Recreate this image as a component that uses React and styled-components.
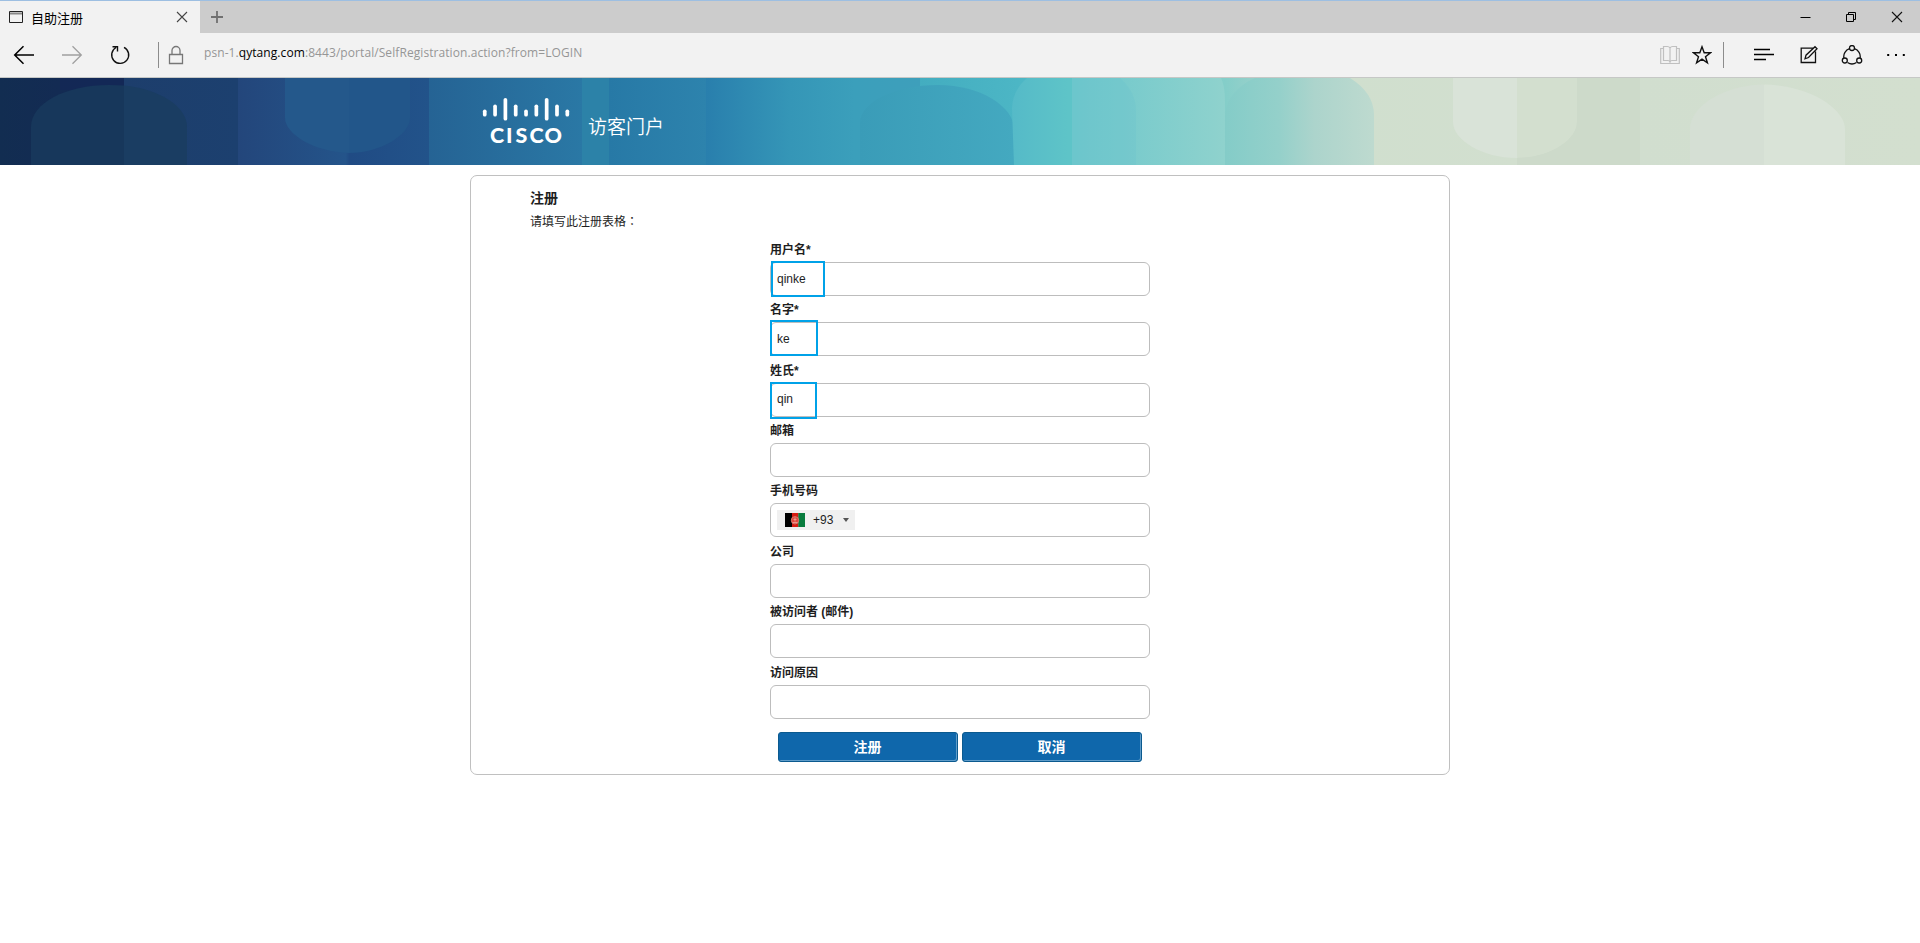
import React from "react";
import styled, { createGlobalStyle } from "styled-components";

const GlobalStyle = createGlobalStyle`
  * { box-sizing: border-box; }
  body {
    margin: 0;
    background: #fff;
    color: #1e1e1e;
    font-family: "Liberation Sans", "Noto Sans CJK SC", sans-serif;
    overflow: hidden;
  }
`;

/* ---------- browser chrome ---------- */
const TabStrip = styled.div`
  display: flex;
  height: 33px;
  background: #ccc;
  border-top: 1px solid #9dbfe2;
`;
const Tab = styled.div`
  display: flex;
  align-items: center;
  width: 200px;
  padding: 0 12px 0 8px;
  background: #f2f2f2;
`;
const TabTitle = styled.span`
  flex: 1;
  margin: 1px 0 0 7px;
  font: 13px/18px "Noto Sans CJK SC", sans-serif;
  color: #000;
`;
const NewTab = styled.div`
  display: flex;
  align-items: center;
  padding-left: 10px;
`;
const WindowControls = styled.div`
  display: flex;
  align-items: center;
  gap: 33px;
  margin-left: auto;
  padding-right: 17px;
`;
const Toolbar = styled.div`
  display: flex;
  align-items: center;
  height: 45px;
  padding: 0 14px 0 13px;
  background: #f2f2f2;
  border-bottom: 1px solid #c6c8c6;
`;
const NavButtons = styled.div`
  display: flex;
  gap: 26px;
`;
const Divider = styled.div`
  width: 1px;
  height: 26px;
  margin: 0 ${(p) => p.$after}px 0 ${(p) => p.$before}px;
  background: #8c8c8c;
`;
const Address = styled.div`
  flex: 1;
  margin: -4px 0 0 20px;
  font: 12px/18px "Open Sans", sans-serif;
  letter-spacing: 0.075px;
  color: #969696;
  white-space: pre;
`;
const Host = styled.span`
  color: #000;
`;
const Tools = styled.div`
  display: flex;
  align-items: center;
  gap: ${(p) => p.$gap}px;
`;

/* ---------- banner ---------- */
const Banner = styled.header`
  position: relative;
  display: flex;
  height: 87px;
  padding: 20px 0 0 482px;
  overflow: hidden;
`;
const BannerArt = styled.svg`
  position: absolute;
  inset: 0;
`;
const Logo = styled.svg`
  position: relative;
`;
const PortalName = styled.h1`
  position: relative;
  margin: 14px 0 0 16px;
  font: 350 19px/28px "Noto Sans CJK SC", sans-serif;
  color: #fff;
`;

/* ---------- form ---------- */
const Card = styled.main`
  width: 980px;
  height: 600px;
  margin: 10px auto 0;
  padding: 11px 59px 0;
  border: 1px solid #c0c0c0;
  border-radius: 7px;
`;
const Title = styled.h2`
  margin: 0;
  font-size: 14px;
  line-height: 22px;
`;
const Intro = styled.p`
  height: 21px;
  margin: 3px 0 0;
  font-size: 12px;
  line-height: 20px;
`;
const CenteredColon = styled.span`
  font-family: "Noto Sans CJK TC", sans-serif;
  line-height: 1;
`;
const Form = styled.form`
  width: 380px;
  margin: 6.8px auto 0;
`;
const Field = styled.div`
  height: 60.4px;
`;
const Label = styled.span`
  display: block;
  height: 22px;
  font-size: 12px;
  font-weight: 700;
  line-height: 21px;
`;
const Control = styled.span`
  position: relative;
  display: flex;
  align-items: center;
  height: 34px;
  padding-left: 6px;
  border: 1px solid #bdbdbd;
  border-radius: 6px;
  font-size: 12px;
`;
const Marker = styled.span`
  position: absolute;
  left: ${(p) => p.$x}px;
  top: ${(p) => p.$y}px;
  width: ${(p) => p.$w}px;
  height: ${(p) => p.$h}px;
  border: 2px solid #00a2e8;
`;
const Value = styled.span`
  margin-top: ${(p) => p.$shift || 0}px;
`;
const CountryCode = styled.span`
  display: flex;
  align-items: center;
  width: 78px;
  height: 20px;
  padding-left: 8px;
  background: #f0f0f0;
`;
const Code = styled.span`
  width: 30px;
  margin-left: 8px;
`;
const Caret = styled.span`
  border: 3px solid transparent;
  border-top: 4px solid #555;
  border-bottom: 0;
`;
const Actions = styled.div`
  display: flex;
  justify-content: center;
  gap: 4px;
  margin-top: 9px;
`;
const Button = styled.button`
  width: 180px;
  height: 30px;
  padding: 0 1px 0 0;
  border: 1px solid #0b5a8f;
  border-radius: 3px;
  background: #0f67ab;
  box-shadow: inset -1px -1px 0 #5f9cc9;
  color: #fff;
  font: 700 14px/26px "Liberation Sans", "Noto Sans CJK SC", sans-serif;
`;

const Icon = ({ w, h, color = "#000", sw = 1, children }) => (
  <svg width={w} height={h} viewBox={`0 0 ${w} ${h}`} fill="none" stroke={color} strokeWidth={sw}>
    {children}
  </svg>
);

const CloseIcon = ({ color }) => (
  <Icon w={12} h={12} color={color} sw={1.1}>
    <path d="M1 1l10 10M11 1L1 11" />
  </Icon>
);

const Flag = () => (
  <svg width="20" height="14">
    <path fill="#000" d="M0 0h7v14H0z" />
    <path fill="#d51c12" d="M7 0h6.500v14H7z" />
    <path fill="#087b3d" d="M13.300 0H20v14h-6.700z" />
    <circle cx="10" cy="7.300" r="3.700" fill="#e0483c" stroke="#d4776c" />
    <path d="M7.500 9.500h5M8.500 6.500h3M10 4.500v4" stroke="#f4a49c" strokeWidth=".8" />
  </svg>
);

const bars = [
  [11.5, 7], [6.500, 12], [0, 22.500], [6.500, 12], [11.5, 7], [6.500, 12], [0, 22.500], [6.500, 12], [11.5, 7],
];

const CiscoLogo = () => (
  <Logo width="90" height="50" fill="#fff">
    {bars.map(([y, h], i) => (
      <rect key={i} x={0.9 + i * 10.32} y={y} width="3.700" height={h} rx="1.850" />
    ))}
    <text
      x="8 24 33.500 47.500 62.500"
      y="45"
      fontFamily="Lato, sans-serif"
      fontWeight="900"
      fontSize="21.500"
    >
      CISCO
    </text>
  </Logo>
);

const BannerBackground = () => (
  <BannerArt width="1920" height="87" viewBox="0 0 1920 87">
    <defs>
      <linearGradient id="base" gradientUnits="userSpaceOnUse" x1="0" y1="0" x2="1920" y2="0">
        <stop offset="0" stopColor="#122d51" />
        <stop offset=".03" stopColor="#132b53" />
        <stop offset=".0646" stopColor="#132a55" />
        <stop offset=".0646" stopColor="#1d3e6c" />
        <stop offset=".124" stopColor="#1c406f" />
        <stop offset=".124" stopColor="#23467b" />
        <stop offset=".18" stopColor="#24548a" />
        <stop offset=".182" stopColor="#204b84" />
        <stop offset=".2235" stopColor="#22538a" />
        <stop offset=".2235" stopColor="#256394" />
        <stop offset=".303" stopColor="#2a78a5" />
        <stop offset=".3172" stopColor="#2779a6" />
        <stop offset=".3677" stopColor="#2d83ad" />
        <stop offset=".3677" stopColor="#297fad" />
        <stop offset=".4115" stopColor="#3596b7" />
        <stop offset=".445" stopColor="#3b9fbb" />
        <stop offset=".479" stopColor="#3e9fbb" />
        <stop offset=".479" stopColor="#43adc0" />
        <stop offset=".53" stopColor="#4cb6c5" />
        <stop offset=".56" stopColor="#59bfc6" />
        <stop offset=".592" stopColor="#70c8cb" />
        <stop offset=".638" stopColor="#84cec9" />
        <stop offset=".665" stopColor="#a5d2cb" />
        <stop offset=".703" stopColor="#d0dfce" />
        <stop offset=".79" stopColor="#d2dfcf" />
        <stop offset=".79" stopColor="#cddaca" />
        <stop offset=".854" stopColor="#cddaca" />
        <stop offset=".854" stopColor="#d1decf" />
        <stop offset="1" stopColor="#d3dfcf" />
      </linearGradient>
      <linearGradient id="mint">
        <stop offset="0" stopColor="#84ccc8" />
        <stop offset=".36" stopColor="#94d0ca" />
        <stop offset=".6" stopColor="#acd4cc" />
        <stop offset="1" stopColor="#bedacf" />
      </linearGradient>
      <linearGradient id="aqua">
        <stop offset="0" stopColor="#6dc7cc" />
        <stop offset="1" stopColor="#8fd2cd" />
      </linearGradient>
      <linearGradient id="sea">
        <stop offset="0" stopColor="#3a9cb8" />
        <stop offset="1" stopColor="#44a9c0" />
      </linearGradient>
      <linearGradient id="turquoise">
        <stop offset="0" stopColor="#55bac8" />
        <stop offset=".45" stopColor="#5ec4c8" />
        <stop offset="1" stopColor="#60c4c8" />
      </linearGradient>
    </defs>
    <path fill="url(#base)" d="M0 0h1920v87H0z" />
    <path fill="#142558" opacity=".5" d="M60 0h64v12H60z" />
    <path fill="#17375b" d="M31 87V49C31 25 66 7 109 7L124 7.500V87z" />
    <path fill="#1a3d62" d="M124 7.500C159 11 187 28 187 49V87H124z" />
    <path fill="#24588b" d="M285 0h64v75C314 74 285 56 285 40z" />
    <path fill="#22568a" d="M349 0h61v40C410 57 380 75 349 75z" />
    <path fill="#2c82a8" d="M582 0h27v87h-27z" />
    <path fill="url(#sea)" d="M860 87V45C860 24 895 7 938 7S1014 29 1014 51V87z" />
    <path fill="url(#turquoise)" d="M1014 87L1012 30Q1013 12 1027 0H1120Q1136 14 1136 33V87z" />
    <path fill="url(#aqua)" d="M1072 87V0H1221Q1225 8 1225 23V87z" />
    <path fill="#6ac5cc" opacity=".3" d="M1072 0H1120Q1136 14 1136 33V87H1072z" />
    <path fill="url(#mint)" d="M1225 87V40C1225 23 1235 9 1255 0H1350Q1374 15 1374 37V87z" />
    <path fill="#d9e3d8" d="M1453 0h64v80C1482 80 1453 62 1453 44z" />
    <path fill="#d3dfcf" d="M1517 0h60v44C1577 63 1548 80 1517 80z" />
    <path fill="#cddaca" d="M1517 87V80C1548 80 1577 63 1577 44V87z" />
    <path fill="#d5dfd4" d="M1690 87V51C1690 27 1726 7 1764 6.500V87z" />
    <path fill="#d9e3d7" d="M1764 6.500C1810 7 1845 31 1845 51V87H1764z" />
  </BannerArt>
);

const fields = [
  { label: "用户名*", value: "qinke", marker: [0, -2, 54, 36], shift: 0 },
  { label: "名字*", value: "ke", marker: [-1, -3, 48, 36], shift: 0 },
  { label: "姓氏*", value: "qin", marker: [-1, -2, 47, 37], shift: -2 },
  { label: "邮箱" },
  { label: "手机号码", phone: true },
  { label: "公司" },
  { label: "被访问者 (邮件)" },
  { label: "访问原因" },
];

export default function App() {
  return (
    <>
      <GlobalStyle />
      <TabStrip>
        <Tab>
          <Icon w={16} h={14} color="#222">
            <path d="M1.500 1.500h13v11h-13z" />
            <path d="M2 3.500h12" stroke="#888" strokeWidth="2" />
          </Icon>
          <TabTitle>自助注册</TabTitle>
          <CloseIcon color="#444" />
        </Tab>
        <NewTab>
          <Icon w={14} h={14} color="#707070" sw={1.8}>
            <path d="M7 1v12M1 7h12" />
          </Icon>
        </NewTab>
        <WindowControls>
          <Icon w={13} h={12}><path d="M1.500 6.500h10" /></Icon>
          <Icon w={13} h={12}>
            <path d="M1.500 3.500h7v7h-7zM3.500 3.500v-2h7v7h-2" />
          </Icon>
          <CloseIcon color="#111" />
        </WindowControls>
      </TabStrip>

      <Toolbar>
        <NavButtons>
          <Icon w={22} h={20} sw={1.5}><path d="M21 10H2M10.500 1.200L1.700 10l8.800 8.800" /></Icon>
          <Icon w={22} h={20} color="#a0a0a0" sw={1.3}><path d="M1 10h19M11.500 1.200l8.800 8.800-8.800 8.800" /></Icon>
          <Icon w={22} h={20} color="#111" sw={1.4}>
            <path d="M15 2.300A8.500 8.500 0 1 1 7 2.500M3.500 1.700H8.500V6.500" />
          </Icon>
        </NavButtons>
        <Divider $before={27} $after={9} />
        <Icon w={16} h={20} color="#777" sw={1.3}>
          <path d="M1.500 9.500h13v9h-13zM4 9V5.500a4 4 0 0 1 8 0V9" />
        </Icon>
        <Address>psn-1.<Host>qytang.com</Host>:8443/portal/SelfRegistration.action?from=LOGIN</Address>
        <Tools $gap={12}>
          <Icon w={20} h={20} color="#c0c0c0" sw={1.2}>
            <path d="M10 3Q9 1.500 7.500 1.500H3.500v14H8Q9.500 15.500 10 17Q10.500 15.500 12 15.500h4.500v-14h-4Q11 1.500 10 3V17M3.500 3.500H.7v15h18.600v-15h-2.800" />
          </Icon>
          <Icon w={20} h={20} color="#111" sw={1.4}>
            <path d="M10 1.800l2.200 6h6.300l-5 3.900 1.900 6.200-5.400-3.700-5.400 3.700 1.900-6.200-5-3.900h6.300z" />
          </Icon>
        </Tools>
        <Divider $before={11} $after={30} />
        <Tools $gap={23}>
          <Icon w={23} h={20} sw={1.3}>
            <path d="M0 4.500h16M0 9.500h20M0 14.500h12" />
          </Icon>
          <Icon w={18} h={20} color="#111" sw={1.3}>
            <path d="M13.500 3.200H1.200v14.300h14.300V6.500M5 13.800l1-3.600L15 1.700l2 2L8.500 12.500z" />
          </Icon>
          <Icon w={22} h={20} color="#111" sw={1.3}>
            <circle cx="11" cy="3" r="2.500" />
            <circle cx="3.800" cy="15.500" r="2.500" />
            <circle cx="18.200" cy="15.500" r="2.500" />
            <path d="M8.500 3.700A8.200 8.200 0 0 0 2.900 13M13.500 3.700A8.200 8.200 0 0 1 19.100 13M6.500 17.500a8.200 8.200 0 0 0 9 0" />
          </Icon>
          <Icon w={20} h={20}>
            <path d="M1.200 10h2M9 10h2M16.800 10h2" strokeWidth="2" />
          </Icon>
        </Tools>
      </Toolbar>

      <Banner>
        <BannerBackground />
        <CiscoLogo />
        <PortalName>访客门户</PortalName>
      </Banner>

      <Card>
        <Title>注册</Title>
        <Intro>请填写此注册表格<CenteredColon>：</CenteredColon></Intro>
        <Form>
          {fields.map(({ label, value, marker, shift, phone }) => (
            <Field key={label}>
              <Label>{label}</Label>
              <Control>
                {marker && <Marker $x={marker[0]} $y={marker[1]} $w={marker[2]} $h={marker[3]} />}
                {value && <Value $shift={shift}>{value}</Value>}
                {phone && (
                  <CountryCode>
                    <Flag />
                    <Code>+93</Code>
                    <Caret />
                  </CountryCode>
                )}
              </Control>
            </Field>
          ))}
          <Actions>
            <Button type="button">注册</Button>
            <Button type="button">取消</Button>
          </Actions>
        </Form>
      </Card>
    </>
  );
}
